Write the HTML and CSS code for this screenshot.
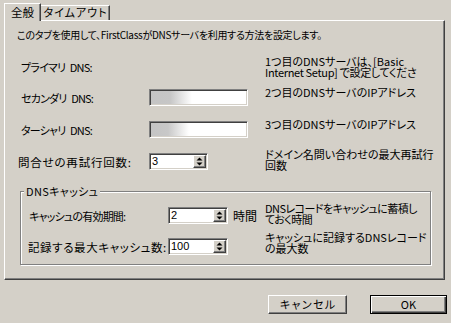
FILE: index.html
```html
<!DOCTYPE html>
<html lang="ja">
<head>
<meta charset="utf-8">
<title>DNS 設定</title>
<link rel="stylesheet" href="styles.css">
</head>
<body>
<div class="dlg">
  <div class="tabs">
    <div class="tab sel">全般</div>
    <div class="tab other">タイムアウト</div>
  </div>
  <div class="panel">
    <p class="intro">このタブを使用して、FirstClassがDNSサーバを利用する方法を設定します。</p>
    <div class="rows">
      <div class="row">
        <span class="lbl l1 kana">プライマリ DNS:</span>
        <span class="blank"></span>
        <span class="desc d1">1つ目のDNSサーバは、[Basic<br><span class="tight">Internet Setup] で設定してくださ</span></span>
      </div>
      <div class="row">
        <span class="lbl kana">セカンダリ DNS:</span>
        <span class="field blur1"></span>
        <span class="desc d2">2つ目のDNSサーバのIPアドレス</span>
      </div>
      <div class="row">
        <span class="lbl kana">ターシャリ DNS:</span>
        <span class="field blur2"></span>
        <span class="desc d3">3つ目のDNSサーバのIPアドレス</span>
      </div>
      <div class="row">
        <span class="lbl kanji">問合せの再試行回数:</span>
        <span class="field spin"><span class="val">3</span><span class="spinbtn"><svg width="9" height="11" viewBox="0 0 9 11"><polygon points="1.5,4.5 4.5,1.5 7.5,4.5" fill="#000"/><polygon points="1.5,6.5 4.5,9.5 7.5,6.5" fill="#000"/></svg></span></span>
        <span class="desc d4">ドメイン名問い合わせの最大再試行<br>回数</span>
      </div>
    </div>
    <fieldset class="group">
      <legend>DNSキャッシュ</legend>
      <div class="grow">
        <span class="glbl gl1">キャッシュの有効期間:</span>
        <span class="field spin"><span class="val">2</span><span class="spinbtn"><svg width="9" height="11" viewBox="0 0 9 11"><polygon points="1.5,4.5 4.5,1.5 7.5,4.5" fill="#000"/><polygon points="1.5,6.5 4.5,9.5 7.5,6.5" fill="#000"/></svg></span></span>
        <span class="unit">時間</span>
        <span class="gdesc ga">DNSレコードをキャッシュに蓄積し<br>ておく時間</span>
      </div>
      <div class="grow">
        <span class="glbl gl2">記録する最大キャッシュ数:</span>
        <span class="field spin"><span class="val">100</span><span class="spinbtn"><svg width="9" height="11" viewBox="0 0 9 11"><polygon points="1.5,4.5 4.5,1.5 7.5,4.5" fill="#000"/><polygon points="1.5,6.5 4.5,9.5 7.5,6.5" fill="#000"/></svg></span></span>
        <span class="unit"></span>
        <span class="gdesc gb">キャッシュに記録するDNSレコード<br>の最大数</span>
      </div>
    </fieldset>
  </div>
  <div class="buttons">
    <button class="btn cancel">キャンセル</button>
    <button class="btn ok">OK</button>
  </div>
</div>
</body>
</html>
```
FILE: styles.css
```css
html, body {
  margin: 0;
  padding: 0;
  background: #d4d0c8;
}
body {
  font-family: "Noto Sans CJK JP", "Noto Sans", sans-serif;
  font-size: 11px;
  color: #000;
  font-feature-settings: "palt";
}
.dlg {
  width: 451px;
  height: 323px;
  box-sizing: border-box;
  padding: 3px 6px 0 4px;
}
.tabs {
  display: flex;
  align-items: flex-end;
  height: 17px;
  position: relative;
  z-index: 2;
}
.tab {
  box-sizing: border-box;
  height: 15px;
  line-height: 13px;
  border: 1px solid;
  border-color: #fff #404040 transparent #fff;
  border-bottom: none;
  box-shadow: inset -1px 0 #808080;
  text-align: center;
  white-space: nowrap;
}
.tab.sel {
  width: 37px;
  height: 18px;
  line-height: 16px;
  margin-bottom: -1px;
  background: #d4d0c8;
  font-size: 11.5px;
}
.tab.other {
  width: 69px;
  border-left: none;
  padding-left: 1px;
  letter-spacing: 1px;
}
.panel {
  box-sizing: border-box;
  height: 260px;
  border: 1px solid;
  border-color: #fff #404040 #404040 #fff;
  box-shadow: inset -1px -1px #808080;
  padding: 0 0 0 12px;
}
.intro {
  margin: 8px 0 0 0;
  font-size: 10px;
  letter-spacing: -0.3px;
  line-height: 12px;
  white-space: nowrap;
}
.rows {
  margin: 15px 0 0 3px;
  display: grid;
  grid-auto-rows: 32px;
}
.row {
  display: grid;
  grid-template-columns: 129px 99px 1fr;
  align-items: start;
}
.lbl {
  line-height: 12px;
  margin-top: 4px;
  white-space: nowrap;
}
.lbl.kana {
  letter-spacing: -0.8px;
  word-spacing: 3px;
  margin-left: 1px;
}
.lbl.kanji {
  font-size: 11.5px;
  letter-spacing: 0.8px;
  margin-left: -2px;
}
.lbl.l1 {
  margin-top: 5px;
}
.desc {
  margin-left: 17px;
  line-height: 11px;
  white-space: nowrap;
}
.tight {
  letter-spacing: -0.33px;
}
.d1 { margin-top: 0; }
.d2 { margin-top: -1px; }
.d3 { margin-top: -1px; }
.d4 { margin-top: -3px; }
.field {
  display: block;
  box-sizing: border-box;
  height: 17px;
  margin-top: 1px;
  background: #fff;
  border: 1px solid;
  border-color: #808080 #fff #fff #808080;
  box-shadow: inset 1px 1px #404040, inset -1px -1px #d4d0c8;
}
.blur1 {
  background: linear-gradient(to right, #c4c4c4 0px, #c6c6c6 20px, #fff 42px);
}
.blur2 {
  background: linear-gradient(to right, #c4c4c4 0px, #c8c8c8 18px, #fff 39px);
}
.spin {
  width: 59px;
  display: flex;
  align-items: center;
  justify-content: space-between;
  padding: 0 1px 0 2px;
}
.val {
  font-family: "Liberation Sans", sans-serif;
  font-size: 11px;
  line-height: 13px;
}
.spinbtn {
  box-sizing: border-box;
  width: 13px;
  height: 13px;
  background: #d4d0c8;
  border: 1px solid;
  border-color: #fff #404040 #404040 #fff;
  box-shadow: inset -1px -1px #808080;
  display: flex;
  align-items: center;
  justify-content: center;
}
.spinbtn svg { display: block; }
.group {
  box-sizing: border-box;
  width: 411px;
  margin: 1px 0 0 3px;
  padding: 3px 0 2px 3px;
  border: 1px solid #808080;
  box-shadow: inset 1px 1px #fff, 1px 1px #fff;
  min-width: 0;
}
.group legend {
  padding: 0 2px;
  line-height: 12px;
  letter-spacing: 0.35px;
  background: #d4d0c8;
}
.grow {
  display: grid;
  grid-template-columns: 139px 60px 37px 1fr;
  align-items: center;
  height: 31px;
  margin-left: 5px;
}
.grow .field { margin-top: 0; width: 60px; }
.glbl {
  white-space: nowrap;
  line-height: 12px;
}
.gl1 { letter-spacing: -0.8px; }
.gl2 { font-size: 11.5px; letter-spacing: 0.6px; margin-left: -1px; }
.unit {
  padding-left: 5px;
  font-size: 12px;
}
.gdesc {
  line-height: 11px;
  white-space: nowrap;
}
.ga { margin-top: -4px; letter-spacing: -0.55px; }
.gb { margin-top: -7px; }
.buttons {
  display: flex;
  justify-content: flex-end;
  gap: 23px;
  margin: 15px -2px 0 0;
}
.btn {
  box-sizing: border-box;
  width: 79px;
  height: 19px;
  padding: 0;
  font: inherit;
  font-size: 11px;
  line-height: 15px;
  background: #d4d0c8;
  color: #000;
  border: 1px solid;
  border-color: #fff #404040 #404040 #fff;
  box-shadow: inset -1px -1px #808080;
  border-radius: 0;
}
.btn.cancel {
  letter-spacing: 1.4px;
  text-indent: 1.4px;
}
.btn.ok {
  width: 77px;
  border: 1px solid #000;
  box-shadow: inset 1px 1px #fff, inset -1px -1px #404040, inset -2px -2px #808080;
}
```
